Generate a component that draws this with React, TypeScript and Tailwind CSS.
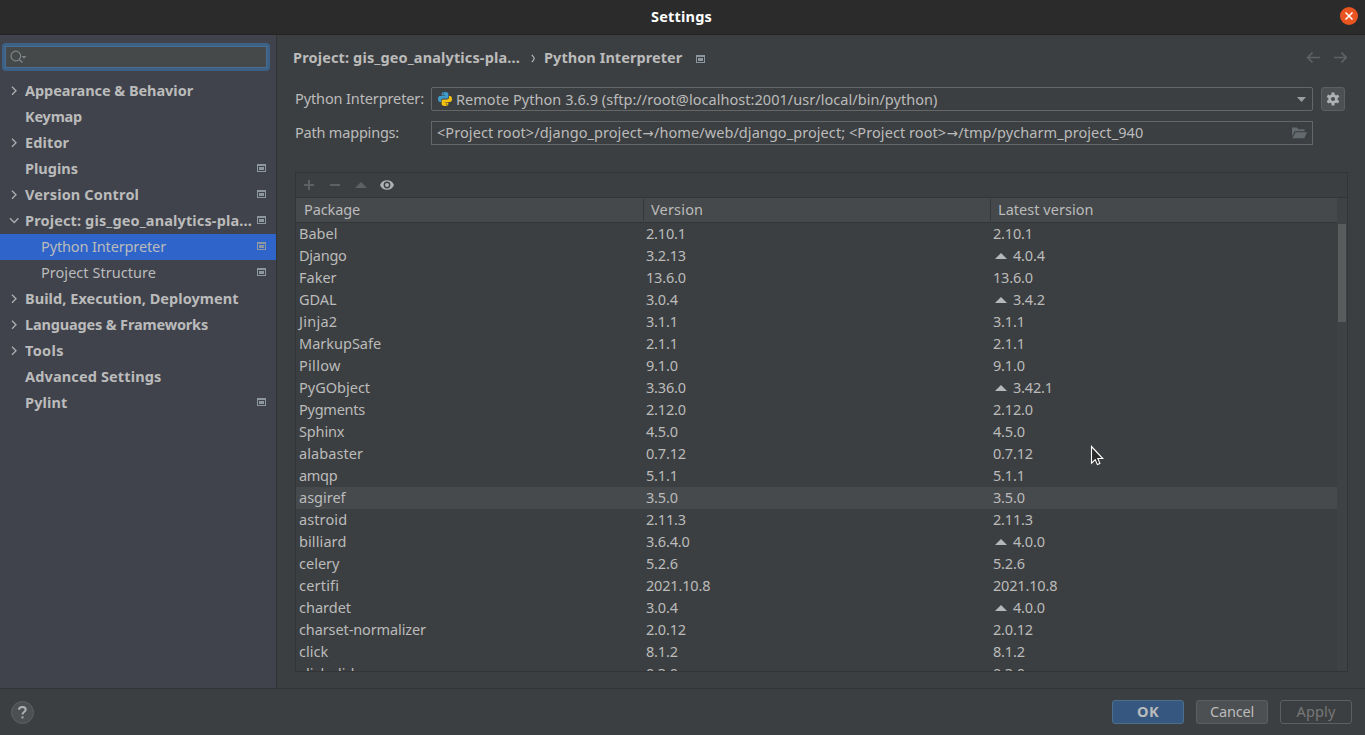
type NavItem = {
  label: string;
  track?: string;
  arrow?: "right" | "down";
  scoped?: boolean;
  child?: boolean;
  selected?: boolean;
};

const NAV: NavItem[] = [
  { label: "Appearance & Behavior", track: "tracking-[-0.05px]", arrow: "right" },
  { label: "Keymap", track: "tracking-[-0.2px]" },
  { label: "Editor", track: "tracking-[0.12px]", arrow: "right" },
  { label: "Plugins", scoped: true },
  { label: "Version Control", track: "tracking-[0.15px]", arrow: "right", scoped: true },
  { label: "Project: gis_geo_analytics-pla...", track: "tracking-[0.14px]", arrow: "down", scoped: true },
  { label: "Python Interpreter", track: "tracking-[-0.13px]", child: true, selected: true, scoped: true },
  { label: "Project Structure", track: "tracking-[0.04px]", child: true, scoped: true },
  { label: "Build, Execution, Deployment", track: "tracking-[0.06px]", arrow: "right" },
  { label: "Languages & Frameworks", track: "tracking-[-0.16px]", arrow: "right" },
  { label: "Tools", track: "tracking-[0.35px]", arrow: "right" },
  { label: "Advanced Settings", track: "tracking-[0.14px]" },
  { label: "Pylint", track: "tracking-[0.15px]", scoped: true },
];

type Pkg = { name: string; version: string; latest: string; track?: string };

const PACKAGES: Pkg[] = [
  { name: "Babel", version: "2.10.1", latest: "2.10.1" },
  { name: "Django", version: "3.2.13", latest: "4.0.4", track: "tracking-[-0.25px]" },
  { name: "Faker", version: "13.6.0", latest: "13.6.0" },
  { name: "GDAL", version: "3.0.4", latest: "3.4.2" },
  { name: "Jinja2", version: "3.1.1", latest: "3.1.1", track: "tracking-[0.25px]" },
  { name: "MarkupSafe", version: "2.1.1", latest: "2.1.1" },
  { name: "Pillow", version: "9.1.0", latest: "9.1.0", track: "tracking-[0.3px]" },
  { name: "PyGObject", version: "3.36.0", latest: "3.42.1" },
  { name: "Pygments", version: "2.12.0", latest: "2.12.0", track: "tracking-[-0.25px]" },
  { name: "Sphinx", version: "4.5.0", latest: "4.5.0", track: "tracking-[-0.15px]" },
  { name: "alabaster", version: "0.7.12", latest: "0.7.12", track: "tracking-[0.07px]" },
  { name: "amqp", version: "5.1.1", latest: "5.1.1", track: "tracking-[-0.3px]" },
  { name: "asgiref", version: "3.5.0", latest: "3.5.0" },
  { name: "astroid", version: "2.11.3", latest: "2.11.3", track: "tracking-[0.1px]" },
  { name: "billiard", version: "3.6.4.0", latest: "4.0.0", track: "tracking-[0.1px]" },
  { name: "celery", version: "5.2.6", latest: "5.2.6" },
  { name: "certifi", version: "2021.10.8", latest: "2021.10.8", track: "tracking-[0.2px]" },
  { name: "chardet", version: "3.0.4", latest: "4.0.0" },
  { name: "charset-normalizer", version: "2.0.12", latest: "2.0.12", track: "tracking-[-0.11px]" },
  { name: "click", version: "8.1.2", latest: "8.1.2" },
  { name: "click-didyoumean", version: "0.3.0", latest: "0.3.0" },
];

const HOVERED = "asgiref";

function ScopeIcon() {
  return (
    <svg className="block h-[9px] w-[9px] shrink-0" viewBox="0 0 9 9" fill="none" shapeRendering="crispEdges">
      <path d="M0 0H9V8H0ZM1 2V7H8V2Z" fill="#8d979f" fillRule="evenodd" />
      <rect x="2" y="3" width="5" height="3" fill="#8d979f" />
    </svg>
  );
}

function Chevron({ dir }: { dir: "right" | "down" }) {
  return (
    <svg className="block h-[10px] w-[10px]" viewBox="0 0 10 10" fill="none" stroke="#adb0b3" strokeWidth="1.3">
      <path d={dir === "right" ? "M3 0.8L7 4.8L3 8.8" : "M1 2.3L5.2 6.5L9.4 2.3"} />
    </svg>
  );
}

function PythonIcon() {
  return (
    <svg className="block h-[14px] w-[14px] shrink-0" viewBox="0 0 14 14">
      <path
        d="M7 0C4.6 0 3.6.7 3.6 2V3.6H7.2V4.1H2C.7 4.1 0 5.3 0 7.1S.8 10 1.9 10H3.1V8.6C3.1 7.3 4.1 6.6 5.2 6.6H8.6C9.7 6.6 10.4 5.9 10.4 4.9V2C10.4.7 9.3 0 7 0Z"
        fill="#3f9bc9"
      />
      <path
        d="M7 14C9.4 14 10.4 13.3 10.4 12V10.4H6.8V9.9H12C13.3 9.9 14 8.7 14 6.9S13.2 4 12.1 4H11V5.4C11 6.7 10 7.4 8.9 7.4H5.4C4.3 7.4 3.6 8.1 3.6 9.1V12C3.6 13.3 4.7 14 7 14Z"
        fill="#f4c20d"
      />
      <circle cx="5.3" cy="1.8" r="0.6" fill="#3c3f41" />
      <circle cx="8.7" cy="12.2" r="0.6" fill="#3c3f41" />
    </svg>
  );
}

function GearIcon() {
  return (
    <svg className="block h-[14px] w-[14px]" viewBox="0 0 14 14">
      <g fill="#afb1b3">
        <rect x="5.5" y="0.5" width="3" height="13" />
        <rect x="5.5" y="0.5" width="3" height="13" transform="rotate(60 7 7)" />
        <rect x="5.5" y="0.5" width="3" height="13" transform="rotate(120 7 7)" />
        <circle cx="7" cy="7" r="4.7" />
      </g>
      <circle cx="7" cy="7" r="2.1" fill="#4c5052" />
    </svg>
  );
}

function FolderIcon() {
  return (
    <svg className="block h-[12px] w-[16px]" viewBox="0 0 16 12" fill="#636a6e">
      <path d="M1 0.5H6L7.5 2.3H13.5V4.3H3.8L1 9.5Z" />
      <path d="M4.5 5.2H16L13.3 11.3H1.3Z" />
    </svg>
  );
}

function UpTriangle() {
  return (
    <svg className="mt-[2px] mr-[6px] ml-[2px] block h-[6px] w-[12px]" viewBox="0 0 12 6">
      <path d="M6 0L12 6H0Z" fill="#b5b7b8" />
    </svg>
  );
}

function Sidebar() {
  return (
    <aside className="flex w-[277px] shrink-0 flex-col border-r border-[#313335] bg-[#40434c]">
      <div className="mx-[2px] mt-2 flex h-7 w-[268px] items-center rounded-[4px] border-[3px] border-[#3d6185]">
        <div className="flex h-full w-full items-center border border-[#466d94] bg-[#45494a] pl-[4px]">
          <svg className="block h-[14px] w-[18px]" viewBox="0 0 18 14" fill="none">
            <circle cx="5.8" cy="6" r="4.8" stroke="#7f8487" strokeWidth="1.2" />
            <path d="M9.2 9.4L12.4 12.6" stroke="#7f8487" strokeWidth="1.4" />
            <path d="M11.5 6H16.5L14 8.8Z" fill="#7f8487" />
          </svg>
        </div>
      </div>
      <nav className="mt-[7px] flex flex-col">
        {NAV.map((item) => (
          <div
            key={item.label}
            className={`flex h-[26px] items-center pr-[10px] ${item.selected ? "bg-[#2f65ca]" : ""}`}
          >
            <span className={`flex shrink-0 pl-[9px] ${item.child ? "w-[41px]" : "w-[25px]"}`}>
              {item.arrow && <Chevron dir={item.arrow} />}
            </span>
            <span
              className={`flex-1 pb-[2px] whitespace-nowrap ${item.child ? "" : "font-bold"} ${item.track ?? ""}`}
            >
              {item.label}
            </span>
            {item.scoped && (
              <span className="pb-px">
                <ScopeIcon />
              </span>
            )}
          </div>
        ))}
      </nav>
    </aside>
  );
}

function Breadcrumb() {
  return (
    <div className="flex h-[20px] items-center whitespace-nowrap font-bold">
      <span className="w-[239px] pb-[2px] pl-[8px] tracking-[0.14px]">Project: gis_geo_analytics-pla...</span>
      <svg className="ml-[7px] block h-[9px] w-[5px]" viewBox="0 0 5 9" fill="none" stroke="#bbbbbb" strokeWidth="1.1">
        <path d="M0.8 0.8C2 2 3.2 3.2 3.2 4.5S2 7 0.8 8.2" />
      </svg>
      <span className="ml-[8px] w-[152px] pb-[2px] tracking-[0.06px]">Python Interpreter</span>
      <span className="pt-[3px]">
        <ScopeIcon />
      </span>
      <svg
        className="mr-[18px] ml-auto block h-[12px] w-[41px]"
        viewBox="0 0 41 12"
        fill="none"
        stroke="#5e6163"
        strokeWidth="1.7"
      >
        <path d="M14 5.5H2M6.5 0.7L1.7 5.5L6.5 10.3" />
        <path d="M28 5.5H40M35.5 0.7L40.3 5.5L35.5 10.3" />
      </svg>
    </div>
  );
}

function Toolbar() {
  return (
    <div className="flex h-[25px] items-center border-b border-[#323435] pl-[8px]">
      <svg className="block h-[14px] w-[94px]" viewBox="0 0 94 14" fill="#5e6163">
        <path d="M4 2H6V6H10V8H6V12H4V8H0V6H4Z" />
        <rect x="26" y="6" width="10" height="2" />
        <path d="M51 10L57 4L63 10Z" />
        <path d="M76 7C77.5 3.6 80 2.2 83 2.2S88.5 3.6 90 7C88.5 10.4 86 11.8 83 11.8S77.5 10.4 76 7Z" fill="#afb1b3" />
        <circle cx="83" cy="7" r="3.4" fill="#3c3f41" />
        <circle cx="83" cy="7" r="2" fill="#afb1b3" />
      </svg>
    </div>
  );
}

function PackageTable() {
  return (
    <div className="mr-[17px] ml-[10px] mt-[27px] flex h-[500px] flex-col overflow-hidden border border-[#323435]">
      <Toolbar />
      <div className="flex min-h-0 flex-1">
        <div className="flex min-w-0 flex-1 flex-col">
          <div className="flex h-[25px] shrink-0 items-center border-b border-[#323435] bg-[#45494b]">
            <span className="flex h-[22px] w-[348px] items-center border-r border-[#35383a] pb-[2px] pl-[8px] tracking-[-0.1px]">
              Package
            </span>
            <span className="flex h-[22px] w-[347px] items-center border-r border-[#35383a] pb-[2px] pl-[7px] tracking-[0.18px]">
              Version
            </span>
            <span className="pb-[2px] pl-[7px] tracking-[0.03px]">Latest version</span>
          </div>
          <div className="min-h-0 flex-1 overflow-hidden">
            {PACKAGES.map((p) => (
              <div
                key={p.name}
                className={`flex h-[22px] items-center pb-[2px] ${p.name === HOVERED ? "bg-[#464a4d]" : ""}`}
              >
                <span className={`w-[350px] pl-[3px] ${p.track ?? ""}`}>{p.name}</span>
                <span className="w-[347px] tracking-[-0.17px]">{p.version}</span>
                <span className="flex items-center tracking-[-0.17px]">
                  {p.latest !== p.version && <UpTriangle />}
                  {p.latest}
                </span>
              </div>
            ))}
          </div>
        </div>
        <div className="w-[10px] shrink-0 bg-[#3f4244] pt-[26px] pl-px">
          <div className="h-[98px] w-[8px] bg-[#595c5d]" />
        </div>
      </div>
    </div>
  );
}

function Arrow() {
  return <span className="inline-block w-[12px] text-center font-['DejaVu_Sans',sans-serif] text-[13.5px] leading-[18px]">→</span>;
}

function Main() {
  return (
    <main className="flex min-w-0 flex-1 flex-col pt-[13px] pl-[8px]">
      <Breadcrumb />
      <div className="mt-[19px] flex h-6 items-center pl-[10px]">
        <label className="w-[136px] pb-[2px] tracking-[-0.12px]">Python Interpreter:</label>
        <div className="flex h-6 w-[882px] items-center rounded-[2px] border border-[#646668] pr-[6px] pl-[6px]">
          <PythonIcon />
          <span className="ml-[4px] flex-1 whitespace-nowrap tracking-[0.04px]">
            Remote Python 3.6.9 (sftp://root@localhost:2001/usr/local/bin/python)
          </span>
          <svg className="block h-[5px] w-[9px]" viewBox="0 0 9 5">
            <path d="M0 0H9L4.5 5Z" fill="#9b9ea0" />
          </svg>
        </div>
        <button className="ml-[8px] flex h-6 w-6 items-center justify-center rounded-[3px] border border-[#5e6060] bg-[#4c5052]">
          <GearIcon />
        </button>
      </div>
      <div className="mt-[10px] flex h-6 items-center pl-[10px]">
        <label className="w-[136px] pb-[2px] tracking-[-0.2px]">Path mappings:</label>
        <div className="flex h-6 w-[882px] items-center border border-[#646668] pr-[5px] pl-[5px]">
          <span className="h-5 flex-1 -translate-y-px whitespace-nowrap tracking-[0.07px]">
            {"<Project root>/django_project"}
            <Arrow />
            {"/home/web/django_project; <Project root>"}
            <Arrow />
            {"/tmp/pycharm_project_940"}
          </span>
          <FolderIcon />
        </div>
      </div>
      <PackageTable />
    </main>
  );
}

function Footer() {
  return (
    <footer className="flex h-[47px] items-center border-t border-[#323435] pr-[13px] pl-[11px]">
      <button className="mt-px flex h-[23px] w-[23px] items-center justify-center rounded-full border border-[#5e6060] bg-[#4c5052]">
        <svg className="block h-[13px] w-[9px]" viewBox="0 0 9 13" fill="none">
          <path d="M1 3.8C1 2 2.4 1 4.3 1S7.7 2 7.7 3.7C7.7 5.8 4.5 5.8 4.5 8.6" stroke="#afb1b3" strokeWidth="2" />
          <rect x="3.5" y="10.4" width="2" height="2" fill="#afb1b3" />
        </svg>
      </button>
      <div className="ml-auto flex gap-3">
        <button className="h-6 w-[72px] rounded-[3px] border border-[#4c708c] bg-[#365880] pb-[2px] font-bold leading-[20px] tracking-[0.4px]">
          OK
        </button>
        <button className="h-6 w-[72px] rounded-[3px] border border-[#5e6060] bg-[#4c5052] pb-[2px] leading-[20px] tracking-[-0.19px]">
          Cancel
        </button>
        <button className="h-6 w-[72px] rounded-[3px] border border-[#5e6060] pb-[2px] leading-[20px] tracking-[0.15px] text-[#777777]">
          Apply
        </button>
      </div>
    </footer>
  );
}

export default function App() {
  return (
    <div className="relative flex h-[735px] w-[1365px] flex-col overflow-hidden bg-[#3c3f41] font-['Noto_Sans','Open_Sans',sans-serif] text-[14.5px] leading-[20px] text-[#bbbbbb]">
      <header className="flex h-[35px] shrink-0 items-center border-b border-[#232323] bg-[#2b2b2b] pr-[7px] pl-[651px]">
        <h1 className="pb-[2px] font-bold tracking-[0.2px] text-white">Settings</h1>
        <button className="mb-[2px] ml-auto flex h-[18px] w-[18px] items-center justify-center rounded-full bg-[#e95420]">
          <svg className="block h-[8px] w-[8px]" viewBox="0 0 8 8" stroke="#ffffff" strokeWidth="1.5">
            <path d="M0.5 0.5L7.5 7.5M7.5 0.5L0.5 7.5" />
          </svg>
        </button>
      </header>
      <div className="flex min-h-0 flex-1">
        <Sidebar />
        <Main />
      </div>
      <Footer />
      <svg className="pointer-events-none absolute top-[445px] left-[1090px] h-[22px] w-[14px]" viewBox="0 0 14 22">
        <path
          d="M1.5 1.5V18.2L5.2 14.6L7.4 19.6L9.9 18.4L7.8 13.5H12.8Z"
          fill="#2b2b2b"
          stroke="#ffffff"
          strokeWidth="1.1"
        />
      </svg>
    </div>
  );
}
